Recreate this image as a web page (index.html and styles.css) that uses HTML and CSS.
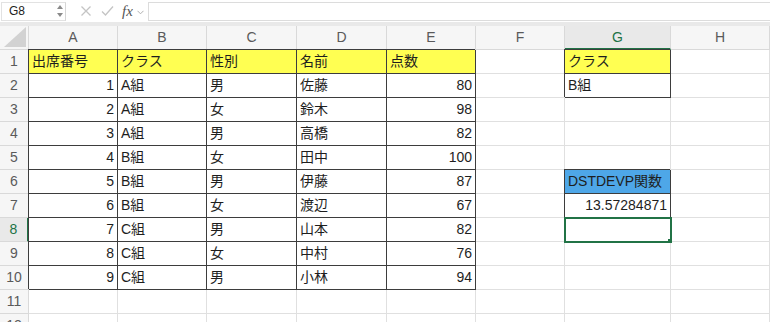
FILE: index.html
```html
<!DOCTYPE html>
<html lang="ja">

<head>
    <meta charset="UTF-8">
    <title>DSTDEVP</title>
    <link rel="stylesheet" href="styles.css">
</head>

<body>

    <div class="formula-bar">
        <div class="name-box">
            <span class="name-text">G8</span>
            <svg class="spin" width="6" height="14" viewBox="0 0 6 14">
                <polygon points="3,1 6,5 0,5" fill="#8a8a8a"/>
                <polygon points="0,9 6,9 3,13" fill="#8a8a8a"/>
            </svg>
        </div>
        <svg class="fb-icon" width="12" height="12" viewBox="0 0 12 12">
            <path d="M1.5 1.5 L10.5 10.5 M10.5 1.5 L1.5 10.5" stroke="#c4c4c4" stroke-width="1.3" fill="none"/>
        </svg>
        <svg class="fb-icon" width="13" height="12" viewBox="0 0 13 12">
            <path d="M1 6.5 L4.5 10 L12 1.5" stroke="#c4c4c4" stroke-width="1.3" fill="none"/>
        </svg>
        <span class="fx">fx</span>
        <svg class="chev" width="7" height="5" viewBox="0 0 7 5">
            <path d="M0.5 0.8 L3.5 3.8 L6.5 0.8" stroke="#b0b0b0" stroke-width="1" fill="none"/>
        </svg>
        <div class="formula-input"></div>
    </div>

    <div class="sheet">
        <!-- header row -->
        <div class="hd corner">
            <svg width="22" height="20" viewBox="0 0 22 20"><polygon points="22,0 22,20 0,20" fill="#d2d2d2"/></svg>
        </div>
        <div class="hd">A</div>
        <div class="hd">B</div>
        <div class="hd">C</div>
        <div class="hd">D</div>
        <div class="hd">E</div>
        <div class="hd">F</div>
        <div class="hd sel">G</div>
        <div class="hd">H</div>

        <!-- 1 -->
        <div class="rh">1</div>
        <div class="c b yellow">出席番号</div>
        <div class="c b yellow">クラス</div>
        <div class="c b yellow">性別</div>
        <div class="c b yellow">名前</div>
        <div class="c b yellow">点数</div>
        <div class="c"></div>
        <div class="c b yellow">クラス</div>
        <div class="c"></div>

        <!-- 2 -->
        <div class="rh">2</div>
        <div class="c b num">1</div>
        <div class="c b">A組</div>
        <div class="c b">男</div>
        <div class="c b">佐藤</div>
        <div class="c b num">80</div>
        <div class="c"></div>
        <div class="c b">B組</div>
        <div class="c"></div>

        <!-- 3 -->
        <div class="rh">3</div>
        <div class="c b num">2</div>
        <div class="c b">A組</div>
        <div class="c b">女</div>
        <div class="c b">鈴木</div>
        <div class="c b num">98</div>
        <div class="c"></div>
        <div class="c"></div>
        <div class="c"></div>

        <!-- 4 -->
        <div class="rh">4</div>
        <div class="c b num">3</div>
        <div class="c b">A組</div>
        <div class="c b">男</div>
        <div class="c b">高橋</div>
        <div class="c b num">82</div>
        <div class="c"></div>
        <div class="c"></div>
        <div class="c"></div>

        <!-- 5 -->
        <div class="rh">5</div>
        <div class="c b num">4</div>
        <div class="c b">B組</div>
        <div class="c b">女</div>
        <div class="c b">田中</div>
        <div class="c b num">100</div>
        <div class="c"></div>
        <div class="c"></div>
        <div class="c"></div>

        <!-- 6 -->
        <div class="rh">6</div>
        <div class="c b num">5</div>
        <div class="c b">B組</div>
        <div class="c b">男</div>
        <div class="c b">伊藤</div>
        <div class="c b num">87</div>
        <div class="c"></div>
        <div class="c b blue">DSTDEVP関数</div>
        <div class="c"></div>

        <!-- 7 -->
        <div class="rh">7</div>
        <div class="c b num">6</div>
        <div class="c b">B組</div>
        <div class="c b">女</div>
        <div class="c b">渡辺</div>
        <div class="c b num">67</div>
        <div class="c"></div>
        <div class="c b num">13.57284871</div>
        <div class="c"></div>

        <!-- 8 -->
        <div class="rh sel">8</div>
        <div class="c b num">7</div>
        <div class="c b">C組</div>
        <div class="c b">男</div>
        <div class="c b">山本</div>
        <div class="c b num">82</div>
        <div class="c"></div>
        <div class="c active"></div>
        <div class="c"></div>

        <!-- 9 -->
        <div class="rh">9</div>
        <div class="c b num">8</div>
        <div class="c b">C組</div>
        <div class="c b">女</div>
        <div class="c b">中村</div>
        <div class="c b num">76</div>
        <div class="c"></div>
        <div class="c"></div>
        <div class="c"></div>

        <!-- 10 -->
        <div class="rh">10</div>
        <div class="c b num">9</div>
        <div class="c b">C組</div>
        <div class="c b">男</div>
        <div class="c b">小林</div>
        <div class="c b num">94</div>
        <div class="c"></div>
        <div class="c"></div>
        <div class="c"></div>

        <!-- 11 -->
        <div class="rh">11</div>
        <div class="c"></div>
        <div class="c"></div>
        <div class="c"></div>
        <div class="c"></div>
        <div class="c"></div>
        <div class="c"></div>
        <div class="c"></div>
        <div class="c"></div>

        <!-- 12 -->
        <div class="rh">12</div>
        <div class="c"></div>
        <div class="c"></div>
        <div class="c"></div>
        <div class="c"></div>
        <div class="c"></div>
        <div class="c"></div>
        <div class="c"></div>
        <div class="c"></div>
    </div>

</body>

</html>
```

FILE: styles.css
```css
body {
    margin: 0;
    width: 770px;
    height: 322px;
    overflow: hidden;
    background-color: #fff;
    font-family: 'Liberation Sans', 'Noto Sans CJK JP', sans-serif;
    color: #1e1e1e;
}

/* formula bar */
.formula-bar {
    display: flex;
    align-items: center;
    height: 22px;
    background-color: #fff;
    border-bottom: 4px solid #e9e9e9;
}

.name-box {
    display: flex;
    align-items: center;
    justify-content: space-between;
    box-sizing: border-box;
    width: 65px;
    height: 19px;
    margin-left: 1px;
    padding: 0 2px 0 7px;
    border: 1px solid #e2e2e2;
    border-right-color: #d6d6d6;
}

.name-text {
    font-size: 12px;
    color: #222;
}

.fb-icon {
    margin-left: 14px;
}

.fb-icon + .fb-icon {
    margin-left: 9px;
}

.fx {
    margin-left: 8px;
    font-family: 'Liberation Serif', serif;
    font-style: italic;
    font-size: 15px;
    color: #555;
}

.chev {
    margin-left: 4px;
    margin-top: 2px;
}

.formula-input {
    flex: 1;
    height: 17px;
    margin-left: 4px;
    border: 1px solid #dcdcdc;
    border-right: none;
}

/* sheet grid */
.sheet {
    display: grid;
    grid-template-columns: 29px 89px 89px 90px 90px 89px 89px 106px 99px;
    grid-auto-rows: 24px;
}

.hd,
.rh,
.c {
    box-sizing: border-box;
    border-right: 1px solid #e0e0e0;
    border-bottom: 1px solid #e0e0e0;
    line-height: 23px;
    font-size: 14px;
    white-space: nowrap;
    overflow: hidden;
}

.hd,
.rh {
    background-color: #f6f6f6;
    border-color: #d9d9d9;
    color: #5a5a5a;
    text-align: center;
}

.hd.sel {
    background-color: #e9e9e9;
    color: #217346;
    border-bottom: 2px solid #217346;
}

.rh.sel {
    background-color: #e9e9e9;
    color: #217346;
    border-right: 2px solid #217346;
}

.corner {
    display: flex;
    align-items: flex-end;
    justify-content: flex-end;
    padding: 0 2px 2px 0;
}

.c {
    padding: 0 3px;
}

.c.b {
    border-right-color: #3d3d3d;
    border-bottom-color: #3d3d3d;
    box-shadow: -1px -1px 0 #3d3d3d;
}

.num {
    text-align: right;
}

.yellow {
    background-color: #ffff52;
}

.blue {
    background-color: #4ea7e8;
}

.active {
    position: relative;
    outline: 2px solid #217346;
    outline-offset: -1px;
}

.active::after {
    content: "";
    position: absolute;
    right: -3px;
    bottom: -3px;
    width: 5px;
    height: 5px;
    background-color: #217346;
}
```
